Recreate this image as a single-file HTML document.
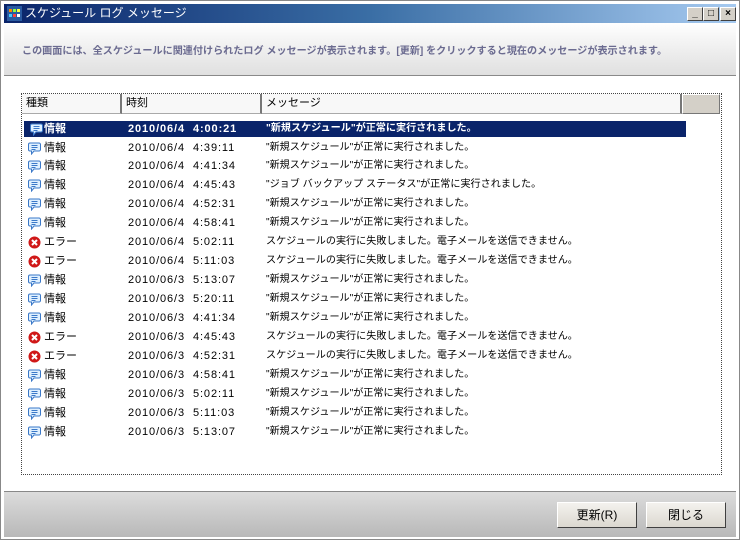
<!DOCTYPE html><html><head><meta charset="utf-8"><style>
*{margin:0;padding:0;box-sizing:border-box}
body{width:740px;height:540px;overflow:hidden;position:relative;background:#d4d0c8;font-family:"Liberation Sans","Noto Sans CJK JP",sans-serif;font-size:11px;color:#000}
.win{position:absolute;left:0;top:0;width:740px;height:540px;border:1px solid #888;background:#fff}
.title{position:absolute;left:3px;top:3px;width:732px;height:19px;background:linear-gradient(90deg,#0a246a,#3a6ea5 50%,#a6caf0);color:#fff;font-size:12px;line-height:19px;padding-left:21px}
.ti{position:absolute;left:3px;top:2px;width:15px;height:15px;background:#2a5aa0}
.ti i{position:absolute;width:3px;height:3px}
.wb{position:absolute;top:3px;width:16px;height:14px;background:#d4d0c8;border:1px solid;border-color:#fff #404040 #404040 #fff;color:#000;font-size:10px;line-height:12px;text-align:center;font-weight:bold}
.hdr{position:absolute;left:3px;top:22px;width:732px;height:53px;background:linear-gradient(#fff,#f2f2f2 40%,#e0e0e0);border-bottom:1px solid #8a8a8a}
.hdr span{position:absolute;left:18px;top:19px;color:#6b6b90;font-weight:bold;font-size:10.1px;white-space:nowrap}
.list{position:absolute;left:20px;top:92px;width:701px;height:382px;border:1px dotted #444;background:#fff}
.col{position:absolute;top:0;height:20px;background:#f8f8f8;border-right:2px solid #777;border-bottom:1px solid #aaa;line-height:19px;padding-left:4px}
.row{position:absolute;left:0;height:16px;line-height:16px;white-space:nowrap;width:700px}
.row span{position:absolute}
.t{letter-spacing:0.9px}
.m{font-size:10.1px}
.sel{background:#0a246a;color:#fff;font-weight:bold;width:662px;left:2px}
.ic{position:absolute;left:6px;top:2px;width:13px;height:13px}
.foot{position:absolute;left:3px;top:490px;width:732px;height:46px;background:linear-gradient(#dcdcdc,#b8b8b8);border-top:1px solid #888}
.btn{position:absolute;top:501px;width:80px;height:26px;background:linear-gradient(#f4f2ee,#dcd8d0);border:1px solid;border-color:#fff #404040 #404040 #fff;text-align:center;line-height:24px;font-size:12px}
</style></head><body><div class="win">
<div class="title"><div class="ti"><i style="left:2px;top:3px;background:#f80"></i><i style="left:6px;top:3px;background:#8f4"></i><i style="left:10px;top:3px;background:#ff4"></i><i style="left:2px;top:8px;background:#4cf"></i><i style="left:6px;top:8px;background:#f44"></i><i style="left:10px;top:8px;background:#fff"></i></div>スケジュール ログ メッセージ
<div class="wb" style="left:683px">_</div><div class="wb" style="left:699px">□</div><div class="wb" style="left:716px">×</div></div>
<div class="hdr"><span>この画面には、全スケジュールに関連付けられたログ メッセージが表示されます。[更新] をクリックすると現在のメッセージが表示されます。</span></div>
<div class="list">
<div class="col" style="left:0;width:100px">種類</div>
<div class="col" style="left:100px;width:140px">時刻</div>
<div class="col" style="left:240px;width:420px">メッセージ</div>
<div class="col" style="left:660px;width:38px;background:#d4d0c8;border:1px solid;border-color:#fff #777 #777 #fff"></div>
<div id="rows"></div>
</div>
<div class="foot"></div>
<div class="btn" style="left:556px">更新(R)</div>
<div class="btn" style="left:645px">閉じる</div>
</div>
<script>
var I='<svg class="ic" viewBox="0 0 13 13"><path d="M2 1h9a1.5 1.5 0 0 1 1.5 1.5v5A1.5 1.5 0 0 1 11 9H6L3.5 12V9H2A1.5 1.5 0 0 1 .5 7.5v-5A1.5 1.5 0 0 1 2 1z" fill="#dff0ff" stroke="#3a78c8"/><path d="M3.5 3.5h6M3.5 5.5h6M3.5 7.5h4" stroke="#3a78c8"/></svg>';
var E='<svg class="ic" viewBox="0 0 13 13"><circle cx="6.5" cy="6.5" r="6" fill="#d01818"/><path d="M4 4l5 5M9 4l-5 5" stroke="#fff" stroke-width="2"/></svg>';
var ok='"新規スケジュール"が正常に実行されました。',ng='スケジュールの実行に失敗しました。電子メールを送信できません。';
var d=[['I','2010/06/4&nbsp;&nbsp;4:00:21',ok],['I','2010/06/4&nbsp;&nbsp;4:39:11',ok],['I','2010/06/4&nbsp;&nbsp;4:41:34',ok],['I','2010/06/4&nbsp;&nbsp;4:45:43','"ジョブ バックアップ ステータス"が正常に実行されました。'],['I','2010/06/4&nbsp;&nbsp;4:52:31',ok],['I','2010/06/4&nbsp;&nbsp;4:58:41',ok],['E','2010/06/4&nbsp;&nbsp;5:02:11',ng],['E','2010/06/4&nbsp;&nbsp;5:11:03',ng],['I','2010/06/3&nbsp;&nbsp;5:13:07',ok],['I','2010/06/3&nbsp;&nbsp;5:20:11',ok],['I','2010/06/3&nbsp;&nbsp;4:41:34',ok],['E','2010/06/3&nbsp;&nbsp;4:45:43',ng],['E','2010/06/3&nbsp;&nbsp;4:52:31',ng],['I','2010/06/3&nbsp;&nbsp;4:58:41',ok],['I','2010/06/3&nbsp;&nbsp;5:02:11',ok],['I','2010/06/3&nbsp;&nbsp;5:11:03',ok],['I','2010/06/3&nbsp;&nbsp;5:13:07',ok]];
var ys=[127,146,164,183,202,221,240,259,278,297,316,335,354,373,392,411,430],h='';
d.forEach(function(r,i){var t=ys[i]-92-8;h+='<div class="row'+(i==0?' sel':'')+'" style="top:'+t+'px">'+(r[0]=='I'?I:E)+'<span style="left:'+(i==0?20:22)+'px">'+(r[0]=='I'?'情報':'エラー')+'</span><span class="t" style="left:'+(i==0?104:106)+'px">'+r[1]+'</span><span class="m" style="left:'+(i==0?242:244)+'px">'+r[2]+'</span></div>';});
document.getElementById('rows').innerHTML=h;
</script>
</body></html>
